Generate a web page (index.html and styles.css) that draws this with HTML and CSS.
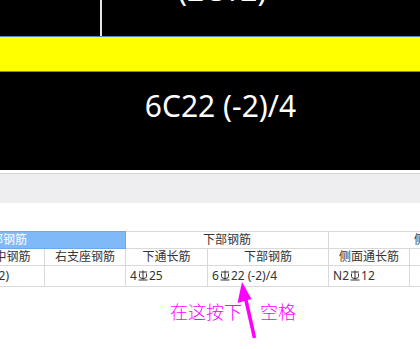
FILE: index.html
```html
<!DOCTYPE html>
<html lang="zh">
<head>
<meta charset="utf-8">
<link rel="stylesheet" href="styles.css">
</head>
<body>
<div class="page">
  <div class="drawing">
    <div class="top-row">
      <div class="top-left"></div>
      <div class="top-right"><div class="big-text top-text">(2C12)</div></div>
    </div>
    <div class="yellow-band"></div>
    <div class="black-block"><div class="big-text">6C22 (-2)/4</div></div>
  </div>
  <div class="gap-white"></div>
  <div class="toolbar"></div>
  <div class="spacer"></div>
  <div class="table-wrap">
    <table class="grid">
      <colgroup>
        <col class="c1"><col class="c2"><col class="c3"><col class="c4"><col class="c5"><col class="c6">
      </colgroup>
      <tr class="head">
        <th colspan="2" class="sel"><span class="sel-text">上部钢筋</span></th>
        <th colspan="2">下部钢筋</th>
        <th colspan="2" class="far">侧面钢筋</th>
      </tr>
      <tr class="sub">
        <td class="first">跨中钢筋</td>
        <td>右支座钢筋</td>
        <td>下通长筋</td>
        <td>下部钢筋</td>
        <td>侧面通长筋</td>
        <td></td>
      </tr>
      <tr class="data">
        <td class="first-data">(-2)</td>
        <td></td>
        <td>4<svg class="rb" viewBox="0 0 10 11"><path d="M5 0.5V9.5M1.5 3.5V6.5Q1.5 8.5 5 8.5Q8.5 8.5 8.5 6.5V3.5M1 2H9M0.5 10H9.5"/></svg>25</td>
        <td>6<svg class="rb" viewBox="0 0 10 11"><path d="M5 0.5V9.5M1.5 3.5V6.5Q1.5 8.5 5 8.5Q8.5 8.5 8.5 6.5V3.5M1 2H9M0.5 10H9.5"/></svg>22 (-2)/4</td>
        <td>N2<svg class="rb" viewBox="0 0 10 11"><path d="M5 0.5V9.5M1.5 3.5V6.5Q1.5 8.5 5 8.5Q8.5 8.5 8.5 6.5V3.5M1 2H9M0.5 10H9.5"/></svg>12</td>
        <td></td>
      </tr>
    </table>
  </div>
  <div class="note">在这按下　空格</div>
  <svg class="arrow" viewBox="0 0 420 349" width="420" height="349">
    <line x1="254.5" y1="338" x2="245.5" y2="298" />
    <polygon points="242,282 237.5,303 251.5,299" />
  </svg>
</div>
</body>
</html>
```

FILE: styles.css
```css
html, body {
  margin: 0;
  padding: 0;
  background: #ffffff;
}
.page {
  position: relative;
  width: 420px;
  height: 349px;
  overflow: hidden;
  font-family: "Noto Sans", "Noto Sans CJK SC", sans-serif;
}
.drawing {
  background: #000;
}
.top-row {
  display: flex;
  height: 36px;
  overflow: hidden;
  border-bottom: 1px solid #4f86c6;
}
.top-left {
  width: 100px;
  border-right: 2px solid #e6e6e6;
}
.top-right {
  flex: 1;
  padding-left: 76px;
}
.big-text {
  color: #fff;
  font-size: 30px;
  line-height: 41px;
  font-family: "Noto Sans", sans-serif;
}
.top-text {
  margin-top: -31px;
}
.yellow-band {
  height: 34px;
  background: #ffff00;
  border-bottom: 1px solid #4f86c6;
}
.black-block {
  height: 85px;
  padding-top: 13px;
  padding-left: 21px;
  text-align: center;
}
.gap-white {
  height: 3px;
  background: #fff;
  border-bottom: 1px solid #d6d6d6;
}
.toolbar {
  height: 29px;
  background: #eeeef0;
}
.spacer {
  height: 28px;
}
.table-wrap {
  overflow: hidden;
  width: 420px;
}
.grid {
  border-collapse: collapse;
  table-layout: fixed;
  margin-left: -32px;
  width: 568px;
  font-family: "Noto Sans", "Noto Sans CJK SC", sans-serif;
  font-size: 12px;
  color: #333;
}
.c1 { width: 76px; }
.c2 { width: 81px; }
.c3 { width: 82px; }
.c4 { width: 121px; }
.c5 { width: 81px; }
.c6 { width: 127px; }
.grid th, .grid td {
  border: 1px solid #d9d9d9;
  padding: 0;
  white-space: nowrap;
  overflow: hidden;
  font-weight: normal;
}
.head th {
  height: 16px;
  line-height: 16px;
  text-align: center;
}
.head th.sel {
  background: #80b9f8;
  border-color: #6aa8ee;
  color: #fff;
  text-align: right;
  padding-right: 98px;
}
.head th.far {
  text-align: left;
  padding-left: 85px;
}
.sub td {
  height: 16px;
  line-height: 16px;
  text-align: center;
}
.data td {
  height: 20px;
  line-height: 20px;
  padding-left: 4px;
}
.data td.first-data {
  text-align: right;
  padding-right: 35px;
  padding-left: 0;
}
.rb {
  width: 10px;
  height: 11px;
  margin: 0 1px;
  vertical-align: -1px;
  fill: none;
  stroke: #333;
  stroke-width: 1;
}
.note {
  position: absolute;
  left: 170px;
  top: 298px;
  font-family: "Noto Sans CJK SC", sans-serif;
  font-size: 18px;
  font-weight: 300;
  color: #ff00ff;
  letter-spacing: 0;
  white-space: nowrap;
}
.arrow {
  position: absolute;
  left: 0;
  top: 0;
}
.arrow line {
  stroke: #ff00ff;
  stroke-width: 3.5;
}
.arrow polygon {
  fill: #ff00ff;
}
```
